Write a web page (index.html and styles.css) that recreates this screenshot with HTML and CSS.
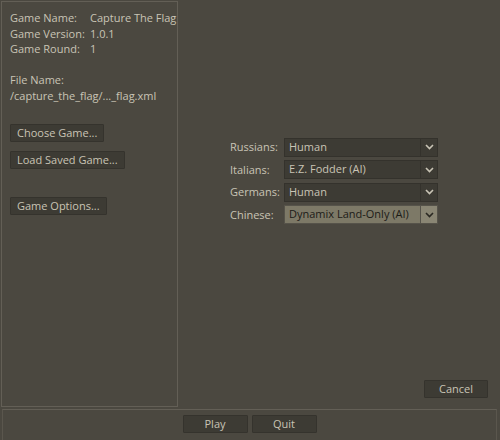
FILE: index.html
```html
<!DOCTYPE html>
<html>
<head>
<meta charset="utf-8">
<link rel="stylesheet" href="styles.css">
</head>
<body>
<div class="app">
  <div class="main">
    <div class="left">
      <div class="info">
        <span>Game Name:</span><span>Capture The Flag</span>
        <span>Game Version:</span><span>1.0.1</span>
        <span>Game Round:</span><span>1</span>
      </div>
      <div class="file">
        <div>File Name:</div>
        <div>/capture_the_flag/..._flag.xml</div>
      </div>
      <div class="btn first">Choose Game...</div>
      <div class="btn second">Load Saved Game...</div>
      <div class="btn third">Game Options...</div>
    </div>
    <div class="right">
      <div class="players">
        <div class="row"><span class="lbl">Russians:</span><div class="combo"><span class="val">Human</span><span class="arr"><svg width="9" height="6" viewBox="0 0 9 6"><path d="M1 1 L4.5 4.5 L8 1" fill="none" stroke="#c9c4b5" stroke-width="1.6"/></svg></span></div></div>
        <div class="row"><span class="lbl">Italians:</span><div class="combo"><span class="val">E.Z. Fodder (AI)</span><span class="arr"><svg width="9" height="6" viewBox="0 0 9 6"><path d="M1 1 L4.5 4.5 L8 1" fill="none" stroke="#c9c4b5" stroke-width="1.6"/></svg></span></div></div>
        <div class="row"><span class="lbl">Germans:</span><div class="combo"><span class="val">Human</span><span class="arr"><svg width="9" height="6" viewBox="0 0 9 6"><path d="M1 1 L4.5 4.5 L8 1" fill="none" stroke="#c9c4b5" stroke-width="1.6"/></svg></span></div></div>
        <div class="row"><span class="lbl">Chinese:</span><div class="combo focus"><span class="val">Dynamix Land-Only (AI)</span><span class="arr"><svg width="9" height="6" viewBox="0 0 9 6"><path d="M1 1 L4.5 4.5 L8 1" fill="none" stroke="#2a2822" stroke-width="1.6"/></svg></span></div></div>
      </div>
      <div class="cancel-row"><div class="btn cancel">Cancel</div></div>
    </div>
  </div>
  <div class="bottom">
    <div class="btn wide">Play</div>
    <div class="btn wide">Quit</div>
  </div>
</div>
</body>
</html>
```
FILE: styles.css
```css
* { box-sizing: border-box; }
html, body { margin: 0; padding: 0; }
body { background: #4b4840; }
.app {
  width: 500px; height: 440px;
  display: flex; flex-direction: column;
  background: #4b4840;
  font-family: "Open Sans", "DejaVu Sans", sans-serif;
  font-size: 11px;
  color: #c9c4b5;
}
.main { display: flex; height: 409px; }
.left {
  width: 177px;
  margin: 1px 0 2px 1px;
  border: 1px solid #635f56;
  padding: 8px 0 0 8px;
  display: flex; flex-direction: column; align-items: flex-start;
  overflow: hidden;
}
.info {
  display: grid;
  grid-template-columns: 80px auto;
  line-height: 15.5px;
  white-space: nowrap;
}
.file { margin-top: 15px; line-height: 16.5px; white-space: nowrap; }
.btn {
  height: 18px;
  padding: 0 6px;
  background: #3d3b34;
  border: 1px solid #35332d;
  border-radius: 1px;
  line-height: 15px;
  color: #c9c4b5;
  white-space: nowrap;
}
.btn.first { margin-top: 19px; }
.btn.second { margin-top: 9px; }
.btn.third { margin-top: 28px; }
.right {
  flex: 1;
  display: flex; flex-direction: column;
  padding: 138px 12px 11px 52px;
}
.players { display: flex; flex-direction: column; gap: 4.6px; }
.row { display: flex; align-items: center; height: 18px; }
.lbl { width: 54px; line-height: 16px; }
.combo {
  width: 154px; height: 19px;
  display: flex;
  background: #3d3b34;
  border: 1px solid #34322c;
}
.combo .val { flex: 1; padding-left: 4px; line-height: 16px; }
.combo .arr {
  width: 17px;
  border-left: 1px solid #34322c;
  display: flex; align-items: center; justify-content: center;
}
.combo.focus { background: #7d7967; border-color: #56534a; }
.combo.focus .val { color: #1c1b17; }
.combo.focus .arr { background: #8a8674; border-left-color: #56534a; }
.cancel-row { margin-top: auto; display: flex; justify-content: flex-end; }
.btn.cancel { width: 64px; text-align: center; }
.bottom {
  flex: 1;
  margin: 0 3px 0 2px;
  border-top: 1px solid #635f56;
  border-left: 1px solid #5a564d;
  border-right: 1px solid #5a564d;
  display: flex; justify-content: center; gap: 4px;
  padding-top: 5px;
}
.btn.wide { width: 65px; text-align: center; }
```
